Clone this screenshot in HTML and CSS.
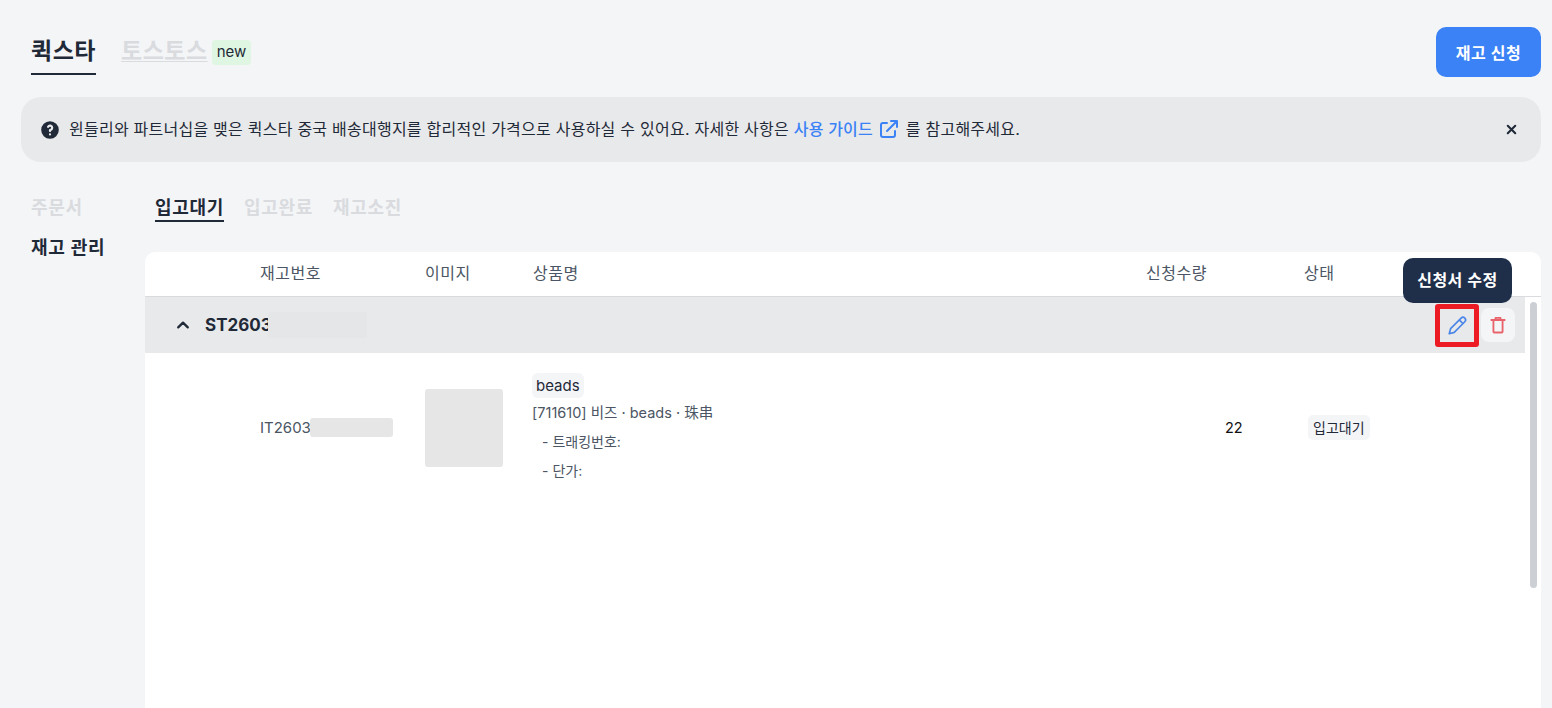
FILE: index.html
```html
<!DOCTYPE html>
<html lang="ko">
<head>
<meta charset="utf-8">
<title>재고 관리</title>
<link rel="stylesheet" href="styles.css">
</head>
<body>
<div class="page">
  <header class="top">
    <nav class="brand-tabs">
      <span class="brand-tab active">퀵스타</span>
      <span class="brand-tab">토스토스</span>
      <span class="new-badge">new</span>
    </nav>
    <button class="primary">재고 신청</button>
  </header>

  <section class="notice">
    <svg class="q-icon" viewBox="0 0 20 20" width="22" height="22"><path fill="#1f2937" fill-rule="evenodd" d="M18 10a8 8 0 1 1-16 0 8 8 0 0 1 16 0zm-8-3a1 1 0 0 0-.867.5 1 1 0 1 1-1.731-1A3 3 0 0 1 13 8a3 3 0 0 1-2 2.83V11a1 1 0 1 1-2 0v-1a1 1 0 0 1 1-1 1 1 0 1 0 0-2zm0 8a1 1 0 1 0 0-2 1 1 0 0 0 0 2z"/></svg>
    <p class="notice-text">윈들리와 파트너십을 맺은 퀵스타 중국 배송대행지를 합리적인 가격으로 사용하실 수 있어요. 자세한 사항은 <a class="guide">사용 가이드<svg viewBox="0 0 24 24" width="24" height="24" fill="none" stroke="#3b82f6" stroke-width="2" stroke-linecap="round" stroke-linejoin="round"><path d="M10 6H6a2 2 0 0 0-2 2v10a2 2 0 0 0 2 2h10a2 2 0 0 0 2-2v-4M14 4h6m0 0v6m0-6L10 14"/></svg></a> 를 참고해주세요.</p>
    <svg class="close" viewBox="0 0 20 20" width="15" height="15"><path d="M5 5l10 10M15 5L5 15" stroke="#1f2937" stroke-width="2.800" stroke-linecap="round"/></svg>
  </section>

  <div class="main">
    <aside class="side">
      <span class="side-item muted">주문서</span>
      <span class="side-item">재고 관리</span>
    </aside>
    <div class="content">
      <nav class="sub-tabs">
        <span class="sub-tab active">입고대기</span>
        <span class="sub-tab">입고완료</span>
        <span class="sub-tab">재고소진</span>
      </nav>
      <div class="card">
        <div class="cols head">
          <span>재고번호</span><span>이미지</span><span>상품명</span><span>신청수량</span><span>상태</span>
        </div>
        <div class="scroll">
          <div class="list">
            <div class="group">
              <svg class="chev" viewBox="0 0 20 20" width="16" height="16"><path d="M4 13l6-6 6 6" fill="none" stroke="#1f2937" stroke-width="2.800" stroke-linecap="round" stroke-linejoin="round"/></svg>
              <strong class="group-id">ST2603</strong>
              <span class="blur-a"></span>
              <div class="actions">
                <button class="icon-btn edit"><svg viewBox="0 0 24 24" width="22" height="22" fill="none" stroke="#4a86e8" stroke-width="1.800" stroke-linecap="round" stroke-linejoin="round"><path d="M16.500 4.500a2.800 2.800 0 0 1 4 4L9 20l-5.500 1.500L5 16 16.500 4.500zM14.500 6.500l4 4"/></svg></button>
                <button class="icon-btn trash"><svg viewBox="0 0 24 24" width="20" height="20" fill="none" stroke="#e8636b" stroke-width="2.200" stroke-linecap="round" stroke-linejoin="round"><path d="M4 6h16M9 6V3.500h6V6M6.500 6v14a1 1 0 0 0 1 1h9a1 1 0 0 0 1-1V6"/></svg></button>
              </div>
              <div class="tooltip">신청서 수정</div>
            </div>
            <div class="cols row">
              <span class="item-id">IT2603<i class="blur-b"></i></span>
              <span class="thumb"></span>
              <div class="info">
                <span class="tag">beads</span>
                <span class="line">[711610] 비즈 · beads · 珠串</span>
                <span class="line sub">- 트래킹번호:</span>
                <span class="line sub">- 단가:</span>
              </div>
              <span class="qty">22</span>
              <span class="status">입고대기</span>
            </div>
          </div>
          <div class="track"><div class="thumb-bar"></div></div>
        </div>
      </div>
    </div>
  </div>
</div>
</body>
</html>
```
FILE: styles.css
```css
* { box-sizing: border-box; }
html, body { margin: 0; height: 100%; overflow: hidden; }
body {
  background: #f4f5f7;
  color: #1f2937;
  font-family: Inter, "Noto Sans CJK KR", sans-serif;
  font-size: 14px;
}
.page { padding: 27px 11px 0 21px; height: 708px; display: flex; flex-direction: column; }

.top { display: flex; justify-content: space-between; align-items: flex-start; height: 50px; }
.brand-tabs { display: flex; align-items: flex-start; padding: 9px 0 0 10px; }
.brand-tab {
  font-size: 23px; letter-spacing: .5px; font-weight: 700; line-height: 30px; color: #d9dbdf;
  height: 39px; text-decoration: underline; text-decoration-thickness: 1px; text-underline-offset: 2px;
  text-decoration-color: #d9dbdf;
}
.brand-tab.active {
  color: #1f2937; text-decoration: none; border-bottom: 2px solid #1f2937; margin-right: 25px;
}
.new-badge {
  background: #dff7e2; border-radius: 4px; padding: 0 5px; height: 25px; line-height: 24px;
  margin: 4px 0 0 4px; font-size: 15px; width: 39px; text-align: center;
}
.primary {
  width: 105px; height: 50px; border: 0; border-radius: 10px; background: #3b82f6; color: #fff;
  font: 600 16px Inter, "Noto Sans CJK KR", sans-serif; letter-spacing: .5px;
}

.notice {
  margin-top: 20px; height: 65px; background: #e8e9eb; border-radius: 20px;
  display: flex; align-items: center; padding: 0 22px 0 18px;
}
.q-icon { flex: none; }
.notice-text { margin: 0 0 4px 8px; flex: 1; font-size: 16px; letter-spacing: .24px; display: flex; align-items: center; white-space: pre-wrap; }
.guide { color: #3b82f6; font-weight: 500; display: inline-flex; align-items: center; gap: 4px; }
.guide svg { margin-top: 2px; }
.close { flex: none; }

.main { display: flex; flex: 1; min-height: 0; margin-top: 32px; }
.side { width: 124px; flex: none; padding: 2px 0 0 10px; display: flex; flex-direction: column; gap: 16px; }
.side-item { font-size: 18px; letter-spacing: .7px; font-weight: 600; line-height: 24px; }
.side-item.muted { color: #d9dbdf; }
.content { flex: 1; min-width: 0; display: flex; flex-direction: column; }
.sub-tabs { display: flex; gap: 20px; padding-left: 10px; height: 58px; }
.sub-tab { font-size: 18px; letter-spacing: .7px; font-weight: 600; line-height: 24px; height: 28px; padding-top: 2px; color: #d9dbdf; }
.sub-tab.active { color: #1f2937; border-bottom: 2px solid #1f2937; }

.card { flex: 1; background: #fff; border-radius: 10px 10px 0 0; display: flex; flex-direction: column; min-height: 0; }
.cols { display: grid; grid-template-columns: 115px 165px 108px 613px 158px 1fr; }
.head { height: 45px; align-items: center; padding-bottom: 4px; border-bottom: 1px solid #d9dbdf; color: #4b5563; font-size: 16px; letter-spacing: .5px; }
.head span:nth-child(1) { grid-column: 1 / 3; margin-left: 115px; }
.head span:nth-child(2) { grid-column: 3; }
.head span:nth-child(3) { grid-column: 4; }
.head span:nth-child(4) { grid-column: 5; }
.head span:nth-child(5) { grid-column: 6; }

.scroll { flex: 1; display: flex; min-height: 0; }
.list { flex: 1; min-width: 0; }
.track { width: 16px; flex: none; padding: 5px 4px 0 5px; }
.thumb-bar { height: 286px; background: #ccd0d5; border-radius: 4px; }

.group { position: relative; height: 56px; background: #e8e9eb; display: flex; align-items: center; padding-left: 30px; }
.group-id { font-size: 17px; font-weight: 700; margin-left: 14px; white-space: nowrap; }
.blur-a { position: absolute; left: 123px; top: 15px; width: 99px; height: 26px; background: #e5e6e8; border-radius: 2px; }
.actions { margin-left: auto; display: flex; align-items: center; gap: 2px; padding-right: 10px; }
.icon-btn { border: 0; padding: 0; display: flex; align-items: center; justify-content: center; background: #f4f5f7; border-radius: 8px; width: 34px; height: 34px; }
.edit { width: 44px; height: 43px; background: #e8e9eb; border: 5px solid #ed1c24; border-radius: 3px; }
.tooltip {
  position: absolute; right: 13px; top: -39px; width: 109px; height: 45px; border-radius: 10px;
  background: #1f2f4a; color: #fff; font-weight: 600; font-size: 16px; letter-spacing: .5px; line-height: 44px; text-align: center;
}

.row { padding-top: 18px; align-items: center; }
.item-id { grid-column: 1 / 3; margin-left: 115px; margin-bottom: 2px; color: #4b5563; font-size: 15px; display: flex; align-items: center; }
.blur-b { width: 83px; height: 19px; background: #e6e6e6; border-radius: 3px; margin-left: -1px; }
.thumb { width: 78px; height: 78px; background: #e6e6e6; border-radius: 3px; }
.info { display: flex; flex-direction: column; align-items: flex-start; color: #4b5563; padding-top: 2px; }
.tag { background: #f4f5f7; color: #1f2937; border-radius: 6px; padding: 0 4px; height: 25px; line-height: 25px; margin-left: -1px; font-size: 15px; }
.line { line-height: 29px; font-size: 14.500px; margin-left: -1px; }
.sub { margin-left: 9px; font-size: 14px; }
.qty { margin-left: 79px; margin-bottom: 2px; color: #111; font-size: 14.500px; }
.status { justify-self: start; margin-left: 4px; margin-bottom: 2px; background: #f4f5f7; border-radius: 5px; padding: 0 5px; height: 25px; line-height: 25px; font-size: 14px; }
```
